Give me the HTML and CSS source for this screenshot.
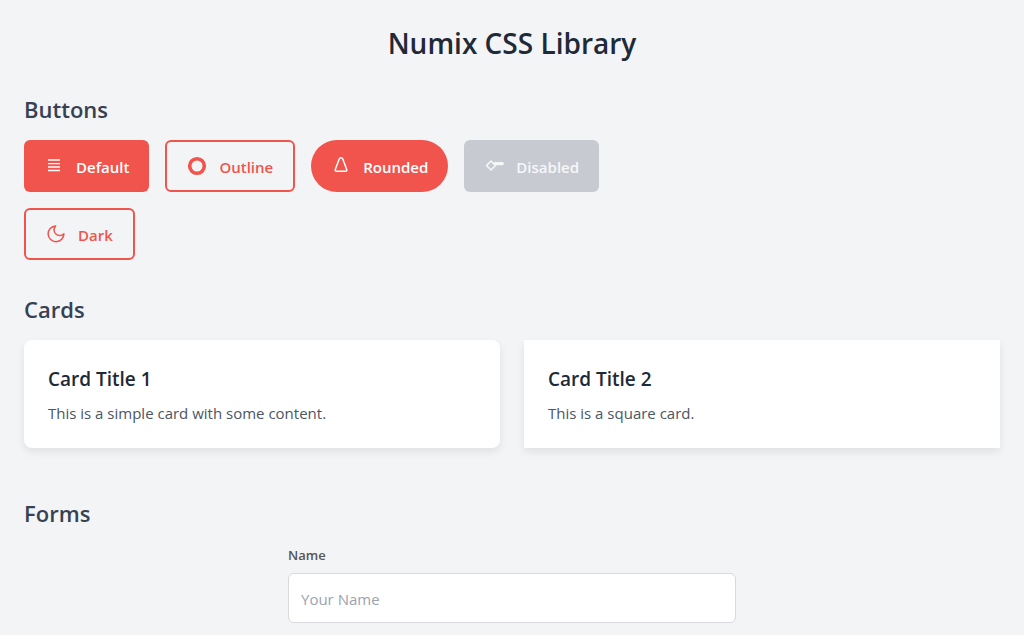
FILE: index.html
```html
<!DOCTYPE html>
<html lang="en">
<head>
<meta charset="utf-8">
<meta name="viewport" content="width=device-width, initial-scale=1">
<title>Numix CSS Library</title>
<link rel="stylesheet" href="styles.css">
</head>
<body>
<main class="page">
  <h1 class="page-title">Numix CSS Library</h1>

  <section class="section">
    <h2 class="section-title">Buttons</h2>
    <div class="button-row">
      <button class="btn" type="button">
        <svg class="icon" viewBox="0 0 20 20" fill="none" stroke="currentColor" stroke-width="1.4" aria-hidden="true"><path d="M4 4h12M4 7.600h12M4 11h12M4 14.500h12"/></svg>
        <span class="btn-label">Default</span>
      </button>
      <button class="btn btn-outline" type="button">
        <svg class="icon" viewBox="0 0 20 20" fill="none" stroke="currentColor" stroke-width="3.6" aria-hidden="true"><circle cx="10" cy="10" r="7.3"/></svg>
        <span class="btn-label">Outline</span>
      </button>
      <button class="btn btn-rounded" type="button">
        <svg class="icon" viewBox="0 0 20 20" fill="none" stroke="currentColor" stroke-width="1.5" stroke-linejoin="round" aria-hidden="true"><path d="M8.200 3Q8.800 1.700 10 1.700T11.800 3l3.900 10.500q.5 1.800-1.300 1.800H5.600Q3.800 15.300 4.300 13.500z"/></svg>
        <span class="btn-label">Rounded</span>
      </button>
      <button class="btn btn-disabled" type="button" disabled>
        <svg class="icon" viewBox="0 0 20 20" fill="none" stroke="currentColor" stroke-width="1.600" stroke-linejoin="round" aria-hidden="true"><path d="M2.500 9.500 7 5l4.500 4.500L7 14z"/><path d="M11 7.600h7.300" stroke-width="3.200" stroke-linecap="round"/></svg>
        <span class="btn-label">Disabled</span>
      </button>
      <button class="btn btn-outline" type="button">
        <svg class="icon" viewBox="0 0 20 20" fill="none" stroke="currentColor" stroke-width="1.500" stroke-linejoin="round" aria-hidden="true"><path d="M9.600 1.900A7.900 7.900 0 1 0 17.900 9.700 5.400 5.400 0 0 1 9.600 1.900z"/></svg>
        <span class="btn-label">Dark</span>
      </button>
    </div>
  </section>

  <section class="section section-cards">
    <h2 class="section-title">Cards</h2>
    <div class="card-grid">
      <article class="card">
        <h3 class="card-title">Card Title 1</h3>
        <p class="card-text">This is a simple card with some content.</p>
      </article>
      <article class="card card-square">
        <h3 class="card-title">Card Title 2</h3>
        <p class="card-text">This is a square card.</p>
      </article>
    </div>
  </section>

  <section class="section">
    <h2 class="section-title">Forms</h2>
    <form class="form">
      <label class="label" for="name">Name</label>
      <input class="input" id="name" type="text" placeholder="Your Name">
    </form>
  </section>
</main>
</body>
</html>
```
FILE: styles.css
```css
* {
  box-sizing: border-box;
}

body {
  margin: 0;
  background: #f3f4f6;
  color: #1f2937;
  font-family: "Segoe UI", "Open Sans", "Noto Sans", sans-serif;
  font-size: 15px;
  line-height: 24px;
}

h1,
h2,
h3,
p {
  margin: 0;
}

.page {
  padding: 24px 24px 12px;
}

.page-title {
  margin-bottom: 30px;
  font-size: 28px;
  font-weight: 600;
  line-height: 38px;
  text-align: center;
}

.section {
  margin-bottom: 32px;
}

.section-cards {
  margin-bottom: 48px;
}

.section-title {
  margin-bottom: 14px;
  color: #374151;
  font-size: 22px;
  font-weight: 600;
  line-height: 34px;
}

.button-row {
  display: flex;
  flex-wrap: wrap;
  gap: 16px;
  max-width: 672px;
}

.btn {
  display: inline-flex;
  align-items: center;
  gap: 12px;
  height: 52px;
  padding: 0 20px;
  border: 0;
  border-radius: 6px;
  background: #f0544c;
  color: #fff;
  font: inherit;
  font-weight: 600;
  cursor: pointer;
}

.btn-outline {
  border: 2px solid #f0544c;
  background: transparent;
  color: #f0544c;
}

.btn-rounded {
  border-radius: 26px;
}

.btn-disabled {
  background: #c7cad1;
  color: #f6f7f8;
  cursor: not-allowed;
}

.btn-label {
  padding-top: 2px;
}

.icon {
  flex: none;
  width: 20px;
  height: 20px;
}

.card-grid {
  display: grid;
  grid-template-columns: 1fr 1fr;
  gap: 24px;
}

.card {
  padding: 25px 24px 23px;
  border-radius: 8px;
  background: #fff;
  box-shadow: 0 4px 8px rgba(0, 0, 0, 0.08);
}

.card-square {
  border-radius: 0;
}

.card-title {
  margin-bottom: 8px;
  font-size: 19px;
  font-weight: 600;
  line-height: 28px;
}

.card-text {
  color: #4b5563;
}

.form {
  max-width: 448px;
  margin: 0 auto;
  padding-top: 1px;
}

.label {
  display: block;
  margin-bottom: 8px;
  color: #555;
  font-size: 13px;
  font-weight: 600;
  line-height: 20px;
}

.input {
  display: block;
  width: 100%;
  height: 50px;
  padding: 2px 12px 0;
  border: 1px solid #d9dadd;
  border-radius: 6px;
  background: #fff;
  color: #1f2937;
  font: inherit;
}

.input::placeholder {
  color: #9ca3af;
}
```
